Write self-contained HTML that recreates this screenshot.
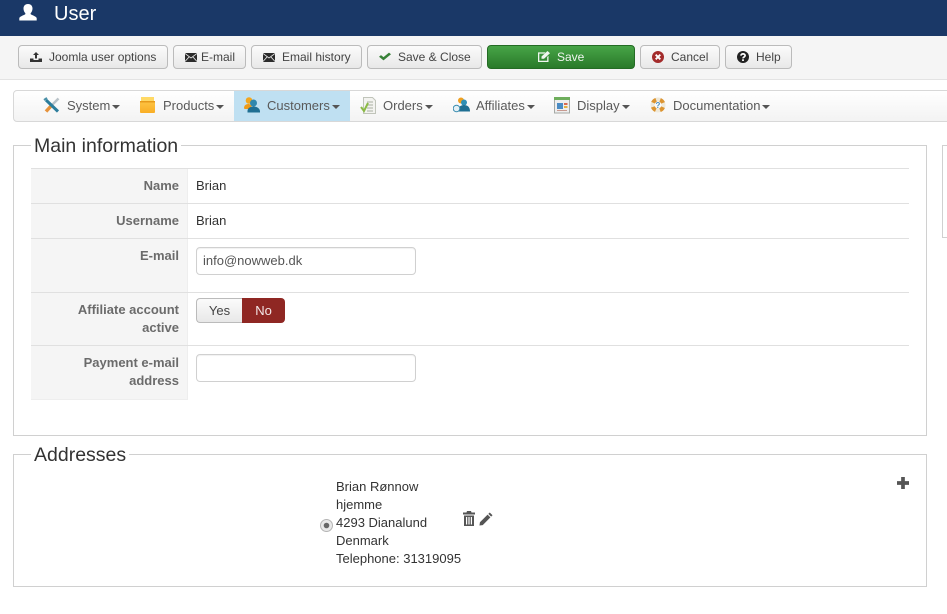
<!DOCTYPE html>
<html>
<head>
<meta charset="utf-8">
<title>User</title>
<style>
html,body{margin:0;padding:0;background:#fff}
body{width:947px;height:614px;position:relative;overflow:hidden;font-family:"Liberation Sans",sans-serif;font-size:13px;color:#333}
.a{position:absolute;white-space:nowrap}
#hd{left:0;top:0;width:947px;height:36px;background:#1a3867}
#hd span{position:absolute;left:54px;top:1px;font-size:20px;line-height:24px;color:#fff}
#tb{left:0;top:36px;width:947px;height:43px;background:#f5f5f5;border-bottom:1px solid #e3e3e3}
.btn{position:absolute;top:45px;height:22px;box-sizing:content-box;border:1px solid #bbb;border-radius:4px;background:linear-gradient(#fbfbfb,#e8e8e8);font-size:12px;line-height:22px;color:#444;white-space:nowrap}
.btn span{position:absolute;top:0}
.btn svg{position:absolute}
#save{background:linear-gradient(#47a447,#2a7a2a);border-color:#246b24;color:#f0f6f0}
#nav{left:13px;top:90px;width:950px;height:30px;box-sizing:content-box;border:1px solid #d8d8d8;border-radius:4px;background:linear-gradient(#fff,#f3f3f3)}
.m{position:absolute;top:90px;height:32px;line-height:31px;font-size:13px;color:#5a5a5a;white-space:nowrap}
.car{display:inline-block;width:0;height:0;border-left:4px solid transparent;border-right:4px solid transparent;border-top:4px solid #555;vertical-align:middle;margin-left:2px;margin-top:1px}
.box{position:absolute;border:1px solid #d0d0d0;box-sizing:border-box}
.lg{position:absolute;background:#fff;font-size:19.5px;line-height:24px;color:#333;padding:0 3px;white-space:nowrap}
.lab{position:absolute;left:31px;width:157px;background:#f5f5f5;box-sizing:border-box;border-right:1px solid #eee}
.l{position:absolute;left:31px;width:148px;text-align:right;font-weight:bold;font-size:13px;line-height:18px;color:#6b6b6b}
.hr{position:absolute;left:31px;width:878px;height:1px;background:#e0e0e0}
.v{position:absolute;left:196px;line-height:18px;color:#333}
.inp{position:absolute;left:196px;width:220px;height:28px;box-sizing:border-box;border:1px solid #d0d0d0;border-radius:4px;background:#fff;padding-left:6px;line-height:25px;color:#555;box-shadow:inset 0 1px 1px rgba(0,0,0,.06)}
</style>
</head>
<body>
<div class="a" id="hd">
<svg style="position:absolute;left:19px;top:3px" width="18" height="18" viewBox="0 0 18 18"><path fill="#fff" d="M9 1C5.800 1 4.500 3.200 4.500 5.500c0 2 .8 3.600 1.700 4.500.3.4.3 1.200-.3 1.500C4 12.500.8 13.500.3 15v2.500h17.400V15c-.5-1.500-3.700-2.500-5.600-3.500-.6-.3-.6-1.100-.3-1.500.9-.9 1.700-2.500 1.700-4.500C13.500 3.200 12.200 1 9 1z"/></svg>
<span style="top:2px">User</span>
</div>
<div class="a" id="tb"></div>

<div class="btn" style="left:18px;width:148px">
<svg style="left:11px;top:6px" width="12" height="10" viewBox="0 0 12 10"><path fill="#333" d="M6 0L9 3H7v3.500H5V3H3zM0 6.500h3.500V8h5V6.500H12V10H0z"/></svg>
<span style="left:30px">Joomla user options</span></div>
<div class="btn" style="left:173px;width:71px">
<svg style="left:11px;top:7px" width="12" height="9" viewBox="0 0 12 9"><rect width="12" height="9" fill="#2b2b2b"/><path fill="none" stroke="#e8e8e8" stroke-width=".8" d="M0 .5L6 5l6-4.500M0 8.500L4.300 3.700M12 8.500L7.700 3.700"/></svg>
<span style="left:27px">E-mail</span></div>
<div class="btn" style="left:251px;width:109px">
<svg style="left:11px;top:7px" width="12" height="9" viewBox="0 0 12 9"><rect width="12" height="9" fill="#2b2b2b"/><path fill="none" stroke="#e8e8e8" stroke-width=".8" d="M0 .5L6 5l6-4.500M0 8.500L4.300 3.700M12 8.500L7.700 3.700"/></svg>
<span style="left:30px">Email history</span></div>
<div class="btn" style="left:367px;width:113px">
<svg style="left:11px;top:6px" width="12" height="9" viewBox="0 0 12 11" preserveAspectRatio="none"><path fill="#378137" d="M0 5.800L2 3.800 4.500 6.300 10 .8 12 2.800 4.500 10.200z"/></svg>
<span style="left:30px">Save &amp; Close</span></div>
<div class="btn" id="save" style="left:487px;width:146px">
<svg style="left:50px;top:5px" width="12" height="11" viewBox="0 0 12 12" preserveAspectRatio="none"><path fill="#f0f6f0" d="M0 1.500h7.500L6.300 2.800H1.300v7.900h7.900V6.500L10.500 5.200V12H0zM9.500 0L12 2.500 6 8.500H3.500V6z"/></svg>
<span style="left:69px">Save</span></div>
<div class="btn" style="left:640px;width:78px">
<svg style="left:11px;top:5px" width="12" height="12" viewBox="0 0 13 13"><circle cx="6.500" cy="6.500" r="6.500" fill="#a32b2b"/><path stroke="#fff" stroke-width="2" d="M4 4l5 5M9 4l-5 5"/></svg>
<span style="left:30px">Cancel</span></div>
<div class="btn" style="left:725px;width:65px">
<svg style="left:11px;top:5px" width="12" height="12" viewBox="0 0 13 13"><circle cx="6.500" cy="6.500" r="6.500" fill="#222"/><path fill="none" stroke="#fff" stroke-width="1.800" d="M4.300 5c0-2.500 4.500-2.500 4.500 0 0 1.500-2.300 1.500-2.300 3"/><rect x="5.500" y="9" width="2" height="1.800" fill="#fff"/></svg>
<span style="left:30px">Help</span></div>

<div class="a" id="nav"></div>
<div class="a" style="left:234px;top:91px;width:116px;height:30px;background:#bfe0f2"></div>

<svg class="a" style="left:43px;top:97px" width="18" height="17" viewBox="0 0 18 17"><path stroke="#b9c2c8" stroke-width="2.500" d="M15.500 1.500L9 8"/><path stroke="#e6933c" stroke-width="3.500" d="M9 8L3 14.500"/><path stroke="#2c7d9c" stroke-width="3" d="M3 3l12 11.500"/><path stroke="#4a90a8" stroke-width="2" d="M1 3l3-2"/></svg>
<div class="m" style="left:67px">System<i class="car"></i></div>

<svg class="a" style="left:140px;top:97px" width="16" height="16" viewBox="0 0 16 16"><defs><linearGradient id="pb" x1="0" y1="0" x2="0" y2="1"><stop offset="0" stop-color="#fdc445"/><stop offset="1" stop-color="#f9ae25"/></linearGradient></defs><rect x="1" y="0" width="13" height="4" fill="#ffd965"/><rect x="0" y="4" width="15" height="12" rx="1" fill="url(#pb)"/><rect x="0" y="4" width="15" height="1.500" fill="#e79a1c"/></svg>
<div class="m" style="left:163px">Products<i class="car"></i></div>

<svg class="a" style="left:244px;top:97px" width="17" height="16" viewBox="0 0 17 16"><circle cx="5" cy="3.500" r="3.300" fill="#f2a61f"/><path fill="#ee9a18" d="M0 11.500C0 8 2 7 5 7l3 1.500-2 3.500H1z"/><circle cx="9.500" cy="6" r="3.500" fill="#2f87ad"/><path fill="#1f6f93" d="M3.500 15.500V14c0-3 3-4.500 6-4.500s6 1.500 6.500 4.500v1.500z"/></svg>
<div class="m" style="left:267px">Customers<i class="car"></i></div>

<svg class="a" style="left:360px;top:97px" width="17" height="17" viewBox="0 0 17 17"><path fill="#f3f3f0" stroke="#c0c4ba" d="M3.500.5h9l3 3v13h-12z"/><path stroke="#a8afa2" d="M7 5h6M7 8h6M7 11h6M7 14h6"/><path fill="none" stroke="#8aba45" stroke-width="2" d="M1 10l3 4 4-8"/></svg>
<div class="m" style="left:383px">Orders<i class="car"></i></div>

<svg class="a" style="left:453px;top:97px" width="17" height="16" viewBox="0 0 17 16"><circle cx="8" cy="3.500" r="3" fill="#f0a020"/><circle cx="11" cy="5.500" r="3" fill="#2f8fb5"/><path fill="#1f6f93" d="M5 14.500c0-5 3-6.500 6-6.500s6 1.500 6 6.500z"/><circle cx="3.500" cy="11.500" r="3.300" fill="#e4f0f5" stroke="#3a8db0"/></svg>
<div class="m" style="left:476px">Affiliates<i class="car"></i></div>

<svg class="a" style="left:554px;top:97px" width="16" height="17" viewBox="0 0 16 17"><rect x=".5" y=".5" width="15" height="15.500" fill="#eee" stroke="#a5a9a5"/><rect x="0" y="0" width="16" height="3" fill="#6eae5c"/><rect x="3" y="6" width="6" height="6" fill="#4b8cc4"/><rect x="10" y="6" width="3.500" height="2" fill="#d86a50"/><rect x="10" y="9" width="3.500" height="2" fill="#e5b040"/><rect x="3" y="13" width="10" height="1" fill="#c89a90"/></svg>
<div class="m" style="left:577px">Display<i class="car"></i></div>

<svg class="a" style="left:650px;top:97px" width="16" height="16" viewBox="0 0 16 16"><circle cx="8" cy="8" r="5.500" fill="none" stroke="#efe9da" stroke-width="4"/><path fill="none" stroke="#dc9430" stroke-width="4" stroke-dasharray="4.320 4.320" stroke-dashoffset="-2.160" d="M8 2.500a5.500 5.500 0 1 1 0 11a5.500 5.500 0 1 1 0-11"/><text x="8" y="11" font-size="8" font-weight="bold" font-family="Liberation Sans" text-anchor="middle" fill="#4a8fc0">?</text></svg>
<div class="m" style="left:673px">Documentation<i class="car"></i></div>

<div class="box" style="left:13px;top:145px;width:914px;height:291px"></div>
<div class="lg" style="left:31px;top:134px">Main information</div>
<div class="box" style="left:942px;top:145px;width:20px;height:93px"></div>

<div class="lab" style="top:168px;height:232px"></div>
<div class="hr" style="top:168px"></div>
<div class="hr" style="top:203px"></div>
<div class="hr" style="top:238px"></div>
<div class="hr" style="top:292px"></div>
<div class="hr" style="top:345px"></div>
<div class="hr" style="top:399px;width:157px;background:#eee"></div>

<div class="l" style="top:177px">Name</div>
<div class="v" style="top:177px">Brian</div>
<div class="l" style="top:212px">Username</div>
<div class="v" style="top:212px">Brian</div>
<div class="l" style="top:247px">E-mail</div>
<div class="inp" style="top:247px">info@nowweb.dk</div>
<div class="l" style="top:301px">Affiliate account<br>active</div>
<div class="a" style="left:196px;top:298px;width:46px;height:25px;box-sizing:border-box;border:1px solid #bbb;border-right:0;border-radius:4px 0 0 4px;background:linear-gradient(#fbfbfb,#e8e8e8);text-align:center;line-height:23px;color:#444">Yes</div>
<div class="a" style="left:242px;top:298px;width:43px;height:25px;box-sizing:border-box;border-radius:0 4px 4px 0;background:#8f2723;text-align:center;line-height:25px;color:#f4e8e8">No</div>
<div class="l" style="top:354px">Payment e-mail<br>address</div>
<div class="inp" style="top:354px"></div>

<div class="box" style="left:13px;top:454px;width:914px;height:133px"></div>
<div class="lg" style="left:31px;top:443px">Addresses</div>

<svg class="a" style="left:320px;top:519px" width="13" height="13" viewBox="0 0 13 13"><circle cx="6.500" cy="6.500" r="6" fill="#e8e8e8" stroke="#b5b5b5"/><circle cx="6.500" cy="6.500" r="2.800" fill="#666"/></svg>
<div class="a" style="left:336px;top:478px;line-height:18px;color:#333">Brian Rønnow<br>hjemme<br>4293 Dianalund<br>Denmark<br>Telephone: 31319095</div>
<svg class="a" style="left:463px;top:511px" width="12" height="15" viewBox="0 0 12 15"><path fill="#555" fill-rule="evenodd" d="M4 0h4l.5 1.500H12V3.500H0V1.500h3.500zM1 4.500h10V15H1zM3 6v7.500h1.200V6zM5.400 6v7.500h1.200V6zM7.800 6v7.500H9V6z"/></svg>
<svg class="a" style="left:479px;top:512px" width="14" height="14" viewBox="0 0 15 15"><path fill="#555" d="M11.500 0.500L14.500 3.500 13 5 10 2zM9.200 2.800L12.200 5.800 4 14 0.500 14.500 1 11z"/></svg>
<svg class="a" style="left:897px;top:477px" width="12" height="12" viewBox="0 0 13 13"><path fill="#555" d="M4.500 0h4v4.500H13v4H8.500V13h-4V8.500H0v-4h4.500z"/></svg>
</body>
</html>
